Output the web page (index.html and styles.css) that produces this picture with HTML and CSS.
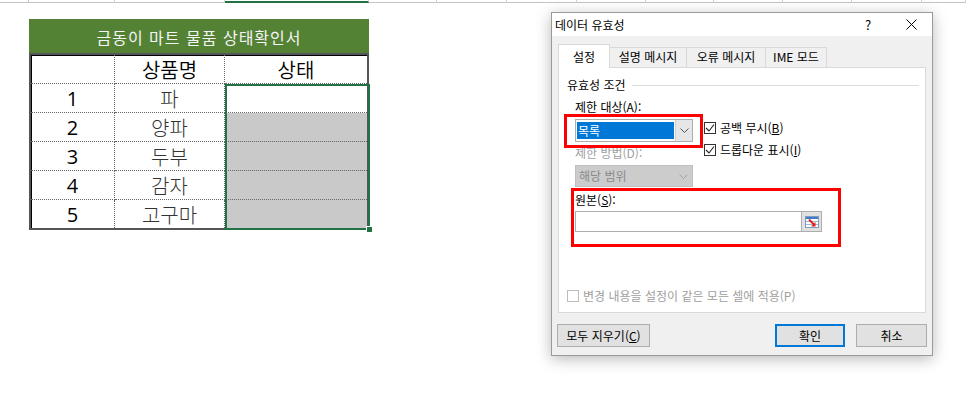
FILE: index.html
```html
<!DOCTYPE html>
<html lang="ko">
<head>
<meta charset="utf-8">
<title>데이터 유효성</title>
<link rel="stylesheet" href="styles.css">
</head>
<body>
<div class="colheads">
  <div class="ch"></div><div class="ch"></div><div class="ch"></div><div class="ch sel"></div><div class="ch"></div><div class="ch"></div><div class="ch"></div><div class="ch"></div><div class="ch"></div><div class="ch"></div><div class="ch"></div><div class="ch"></div><div class="ch"></div>
</div>

<div class="sheet">
  <div class="sheet-table">
    <div class="sheet-title">금동이 마트 물품 상태확인서</div>
    <div class="sheet-grid">
      <div class="cell"></div>
      <div class="cell head">상품명</div>
      <div class="cell head last-col">상태</div>

      <div class="cell num">1</div>
      <div class="cell item">파</div>
      <div class="cell last-col"></div>

      <div class="cell num">2</div>
      <div class="cell item">양파</div>
      <div class="cell last-col shade"></div>

      <div class="cell num">3</div>
      <div class="cell item">두부</div>
      <div class="cell last-col shade"></div>

      <div class="cell num">4</div>
      <div class="cell item">감자</div>
      <div class="cell last-col shade"></div>

      <div class="cell num last-row">5</div>
      <div class="cell item last-row">고구마</div>
      <div class="cell last-col shade last-row"></div>
    </div>
    <div class="selection"><span class="fill-handle"></span></div>
  </div>
</div>

<div class="dialog">
  <div class="titlebar">
    <span class="dtitle">데이터 유효성</span>
    <span class="tb-btns">
      <span class="help">?</span>
      <svg class="close" width="11" height="11" viewBox="0 0 11 11"><path d="M0.5 0.5 L10.5 10.5 M10.5 0.5 L0.5 10.5" stroke="#000" stroke-width="1" fill="none"/></svg>
    </span>
  </div>

  <div class="tabs">
    <div class="tab active">설정</div>
    <div class="tab t2">설명 메시지</div>
    <div class="tab t3">오류 메시지</div>
    <div class="tab t4">IME 모드</div>
  </div>

  <div class="panel">
    <div class="group-title"><span>유효성 조건</span><span class="rule"></span></div>
    <div class="indent">
      <div class="label l-allow">제한 대상(A):</div>
      <div class="allow-row">
        <div class="left-col">
          <div class="combo focused">
            <span class="combo-val"><span class="hl">목록</span></span>
            <span class="combo-btn"><svg width="9" height="5" viewBox="0 0 9 5"><path d="M0.5 0.5 L4.5 4.5 L8.5 0.5" stroke="#555" fill="none"/></svg></span>
          </div>
          <div class="label disabled l-method">제한 방법(D):</div>
          <div class="combo disabled-combo">
            <span class="combo-val">해당 범위</span>
            <span class="combo-btn"><svg width="9" height="5" viewBox="0 0 9 5"><path d="M0.5 0.5 L4.5 4.5 L8.5 0.5" stroke="#a6a6a6" fill="none"/></svg></span>
          </div>
        </div>
        <div class="checks">
          <div class="check"><span class="box"><svg width="10" height="10" viewBox="0 0 10 10"><path d="M1 5 L4 8 L9 1.5" stroke="#222" stroke-width="1.1" fill="none"/></svg></span><span>공백 무시(<u>B</u>)</span></div>
          <div class="check c2"><span class="box"><svg width="10" height="10" viewBox="0 0 10 10"><path d="M1 5 L4 8 L9 1.5" stroke="#222" stroke-width="1.1" fill="none"/></svg></span><span>드롭다운 표시(<u>I</u>)</span></div>
        </div>
      </div>
      <div class="label l-source">원본(<u>S</u>):</div>
      <div class="refedit">
        <div class="ref-input"></div>
        <div class="ref-btn">
          <svg width="14" height="12" viewBox="0 0 14 12">
            <rect x="0.5" y="0.5" width="13" height="11" fill="#fff" stroke="#7f9db9"/>
            <rect x="1" y="1" width="12" height="2" fill="#3f7ccf"/>
            <path d="M1 5.5 H13 M1 8.5 H13" stroke="#9fb8da"/>
            <path d="M4 3.5 L9.5 9" stroke="#e2231a" stroke-width="2"/>
            <path d="M10.5 10.5 L10.5 6 L6 10.5 Z" fill="#e2231a"/>
          </svg>
        </div>
      </div>
    </div>
    <div class="check apply"><span class="box off"></span><span>변경 내용을 설정이 같은 모든 셀에 적용(P)</span></div>

    <div class="redbox r1"></div>
    <div class="redbox r2"></div>
  </div>

  <div class="buttons">
    <div class="btn clear">모두 지우기(<u>C</u>)</div>
    <div class="spacer"></div>
    <div class="btn ok">확인</div>
    <div class="btn cancel">취소</div>
  </div>
</div>
</body>
</html>
```

FILE: styles.css
```css
* { box-sizing: border-box; }

html, body {
  margin: 0;
  padding: 0;
}

body {
  width: 966px;
  height: 408px;
  overflow: hidden;
  position: relative;
  background: #ffffff;
  font-family: "Noto Sans CJK KR", "Noto Sans", sans-serif;
  color: #000;
}

/* ---------- column header strip (top of sheet) ---------- */
.colheads {
  display: grid;
  grid-template-columns: 29px 86px 110px 144px 68px 70px 70px 69px 68px 69px 69px 70px 1fr;
  height: 3px;
}
.ch {
  border-right: 1px solid #d4d4d4;
  border-bottom: 1px solid #c4c4c4;
}
.ch:first-child { border-right-color: #c4c4c4; }
.ch.sel { border-bottom: 2px solid #217346; }

/* ---------- sheet ---------- */
.sheet {
  padding: 16px 0 0 29px;
}
.sheet-table {
  position: relative;
  width: 340px;
}
.sheet-title {
  height: 34px;
  background: #548235;
  color: #f4f4f4;
  font-size: 16px;
  letter-spacing: 1px;
  line-height: 34px;
  text-align: center;
  padding-top: 1px;
}
.sheet-grid {
  display: grid;
  grid-template-columns: 84px 110px 142px;
  grid-template-rows: 29px 29px 29px 29px 29px 28px;
  border: 2px solid #555;
  box-shadow: inset 1px 1px 0 #000;
}
.cell {
  border-right: 1px dotted #666;
  border-bottom: 1px dotted #666;
  display: flex;
  align-items: center;
  justify-content: center;
  font-size: 20px;
  line-height: 1;
}
.cell.last-col { border-right: none; }
.cell.last-row { border-bottom: none; }
.cell.head {
  font-weight: 350;
  padding-top: 2px;
}
.cell.num {
  font-family: "Open Sans", "Noto Sans", sans-serif;
  font-size: 20px;
  padding-top: 2px;
}
.cell.item {
  font-weight: 300;
  color: #333;
  padding-top: 2px;
}
.cell.shade { background: #c9c9c9; }

.selection {
  position: absolute;
  left: 196px;
  top: 65px;
  width: 145px;
  height: 146px;
  border: 2px solid #217346;
}
.fill-handle {
  position: absolute;
  right: -5px;
  bottom: -5px;
  width: 7px;
  height: 7px;
  background: #217346;
  border: 1px solid #fff;
}

/* ---------- dialog window ---------- */
.dialog {
  position: absolute;
  left: 551px;
  top: 12px;
  width: 382px;
  height: 344px;
  background: #f0f0f0;
  border: 1px solid #9a9a9a;
  box-shadow: 0 3px 14px rgba(0, 0, 0, 0.28);
  font-size: 12px;
  line-height: 16px;
  color: #000;
}
.titlebar {
  height: 23px;
  background: #ffffff;
  display: flex;
  align-items: center;
  justify-content: space-between;
  padding-left: 3px;
}
.dtitle {
  font-size: 12px;
  padding-top: 1px;
}
.tb-btns {
  display: flex;
  align-items: center;
}
.help {
  font-size: 13px;
  width: 12px;
  text-align: center;
  margin-right: 32px;
}
.close {
  margin-right: 15px;
}

/* tabs */
.tabs {
  display: flex;
  align-items: flex-end;
  margin: 8px 0 -1px 6px;
  height: 24px;
  position: relative;
  z-index: 2;
}
.tab {
  height: 20px;
  border: 1px solid #d9d9d9;
  border-bottom: none;
  background: #f0f0f0;
  text-align: center;
  line-height: 18px;
  margin-left: -1px;
  margin-bottom: 1px;
}
.tab.active {
  height: 24px;
  width: 52px;
  margin-left: 0;
  margin-bottom: 0;
  background: #ffffff;
  line-height: 23px;
  position: relative;
  z-index: 2;
}
.tab.t2 { width: 78px; }
.tab.t3 { width: 80px; }
.tab.t4 { width: 62px; }

/* panel */
.panel {
  position: relative;
  margin-left: 6px;
  width: 368px;
  height: 246px;
  background: #ffffff;
  border: 1px solid #d9d9d9;
  padding: 9px 6px 0 8px;
}
.group-title {
  display: flex;
  align-items: center;
  height: 16px;
}
.group-title .rule {
  flex: 1;
  height: 1px;
  background: #dcdcdc;
  margin-left: 6px;
}
.indent {
  padding-left: 8px;
}
.label {
  height: 16px;
}
.label.disabled { color: #a0a0a0; }
.l-allow { margin-top: 6px; }
.l-method { margin-top: 3px; }
.l-source { margin-top: 5px; }

.allow-row {
  display: flex;
  margin-top: 4px;
}
.left-col {
  width: 118px;
}
.combo {
  display: flex;
  height: 23px;
  border: 1px solid #adadad;
  background: #fff;
}
.combo-val {
  flex: 1;
  display: flex;
  align-items: center;
  padding: 2px 1px 2px 1px;
}
.combo .hl {
  display: block;
  width: 100%;
  height: 17px;
  background: #0078d7;
  color: #fff;
  line-height: 17px;
  padding-left: 1px;
}
.combo-btn {
  width: 17px;
  display: flex;
  align-items: center;
  justify-content: center;
  background: #e6e6e6;
  border-left: 1px solid #d0d0d0;
}
.disabled-combo {
  margin-top: 4px;
  height: 22px;
  background: #cccccc;
  border-color: #bfbfbf;
  color: #8a8a8a;
}
.disabled-combo .combo-val { padding-left: 3px; }
.disabled-combo .combo-btn {
  background: #cccccc;
  border-left: none;
}

.checks {
  margin-left: 11px;
  padding-top: 1px;
}
.check {
  display: flex;
  align-items: center;
  height: 16px;
}
.check.c2 { margin-top: 6px; }
.box {
  width: 12px;
  height: 12px;
  border: 1px solid #333;
  background: #fff;
  margin-right: 4px;
  display: flex;
  align-items: center;
  justify-content: center;
}
.box.off { border-color: #bcbcbc; }

.refedit {
  display: flex;
  margin-top: 3px;
  height: 21px;
}
.ref-input {
  width: 227px;
  border: 1px solid #adadad;
  background: #fff;
}
.ref-btn {
  width: 20px;
  border: 1px solid #adadad;
  border-left: none;
  background: #e1e1e1;
  display: flex;
  align-items: center;
  justify-content: center;
}

.check.apply {
  margin-top: 56px;
  color: #a0a0a0;
}

.redbox {
  position: absolute;
  border: 3px solid #ff0000;
}
.r1 { left: 5px; top: 46px; width: 139px; height: 34px; }
.r2 { left: 12px; top: 120px; width: 270px; height: 59px; }

/* buttons */
.buttons {
  display: flex;
  margin-top: 11px;
  padding: 0 5px;
}
.spacer { flex: 1; }
.btn {
  height: 23px;
  background: #e1e1e1;
  border: 1px solid #adadad;
  text-align: center;
  line-height: 21px;
}
.btn.clear { width: 93px; }
.btn.ok {
  width: 70px;
  border: 2px solid #0078d7;
  line-height: 19px;
}
.btn.cancel {
  width: 71px;
  margin-left: 11px;
}
```
